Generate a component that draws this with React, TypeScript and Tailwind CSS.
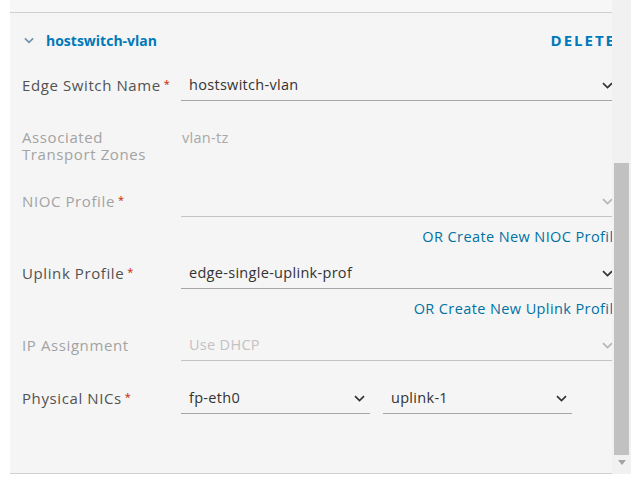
import React from 'react'

const FONT = { fontFamily: '"Open Sans", "Liberation Sans", sans-serif' }

function Caret({ className = '' }: { className?: string }) {
  return (
    <svg width="11" height="7" viewBox="0 0 11 7" className={className} fill="none">
      <path d="M1 1.2 L5.5 5.5 L10 1.2" stroke="currentColor" strokeWidth="1.7" />
    </svg>
  )
}

function Star() {
  return <span className="text-[#c92100] text-[11px] leading-none align-top ml-[3px] tracking-normal">*</span>
}

function Label({ text, req, disabled }: { text: string; req?: boolean; disabled?: boolean }) {
  return (
    <div className={`w-[159px] shrink-0 h-[25px] pb-[7px] flex items-center text-[15px] leading-[18px] tracking-[0.6px] whitespace-nowrap ${disabled ? 'text-[#a3a3a3]' : 'text-[#525252]'}`}>
      <span>{text}</span>
      {req && <span className="self-start mt-[2px]"><Star /></span>}
    </div>
  )
}

function Select({ value, disabled, className = '' }: { value: string; disabled?: boolean; className?: string }) {
  return (
    <div className={`h-[25px] border-b flex items-center justify-between pl-[8px] pb-[6px] ${disabled ? 'border-[#c4c4c4]' : 'border-[#a6a6a6]'} ${className}`}>
      <span className={`text-[14.5px] leading-[18px] tracking-[0.3px] ${disabled ? 'text-[#c2c2c2]' : 'text-[#333]'}`}>{value}</span>
      <Caret className={disabled ? 'text-[#b5b5b5]' : 'text-[#333]'} />
    </div>
  )
}

function Row({ label, req, disabled, children, className = '' }: {
  label: string; req?: boolean; disabled?: boolean; children: React.ReactNode; className?: string
}) {
  return (
    <div className={`flex h-[25px] ${className}`}>
      <Label text={label} req={req} disabled={disabled} />
      <div className="flex-1 flex">{children}</div>
    </div>
  )
}

function Link({ text, className = '' }: { text: string; className?: string }) {
  return (
    <div className={`h-[16px] flex items-center justify-end text-[14.5px] leading-[16px] tracking-[0.4px] text-[#0072a3] whitespace-nowrap ${className}`}>
      {text}
    </div>
  )
}

export default function App() {
  return (
    <div className="w-[636px] h-[485px] bg-white overflow-hidden" style={FONT}>
      <div className="flex ml-[10px] w-[621px] h-[474px]">
        <div className="w-[602px] h-full overflow-hidden bg-[#f5f5f5] border-b border-[#d0d0d0]">
          <div className="h-[12px] bg-[#f7f7f7] border-b border-[#cfcfcf] box-content" />
          <div className="w-[604px] pl-[12px]">
            {/* header */}
            <div className="mt-[13px] h-[28px] flex items-center justify-between">
              <div className="flex items-center">
                <Caret className="text-[#6d8fa8] ml-[2px] w-[10px]" />
                <span className="ml-[12px] text-[14px] font-bold text-[#0079b8]">hostswitch-vlan</span>
              </div>
              <span className="text-[15px] font-bold text-[#0079b8] tracking-[2px] mr-[-2px]">DELETE</span>
            </div>

            <Row label="Edge Switch Name" req className="mt-[22px]">
              <Select value="hostswitch-vlan" className="flex-1 pr-[1px]" />
            </Row>

            <div className="mt-[28px] flex h-[34px]">
              <div className="w-[159px] shrink-0 text-[15px] tracking-[0.6px] leading-[17px] text-[#a3a3a3]">
                Associated<br />Transport Zones
              </div>
              <div className="text-[14.5px] tracking-[0.3px] leading-[17px] text-[#a8a8a8] pl-[1px]">vlan-tz</div>
            </div>

            <Row label="NIOC Profile" req disabled className="mt-[29px]">
              <Select value="" disabled className="flex-1 pr-[1px]" />
            </Row>
            <Link text="OR Create New NIOC Profile" className="mt-[12px] mr-[-8px]" />

            <Row label="Uplink Profile" req className="mt-[19px]">
              <Select value="edge-single-uplink-prof" className="flex-1 pr-[1px]" />
            </Row>
            <Link text="OR Create New Uplink Profile" className="mt-[12px] mr-[-8px]" />

            <Row label="IP Assignment" disabled className="mt-[19px]">
              <Select value="Use DHCP" disabled className="flex-1 pr-[1px]" />
            </Row>

            <Row label="Physical NICs" req className="mt-[28px]">
              <Select value="fp-eth0" className="w-[189px] pr-[5px]" />
              <Select value="uplink-1" className="w-[189px] ml-[13px] pr-[5px]" />
            </Row>
          </div>
        </div>
        {/* scrollbar */}
        <div className="w-[19px] h-full bg-[#f1f1f1] flex flex-col items-center">
          <div className="mt-[163px] w-[15px] h-[292px] bg-[#c1c1c1]" />
          <div className="mt-[5px] w-0 h-0 border-l-[4px] border-r-[4px] border-t-[5px] border-l-transparent border-r-transparent border-t-[#a3a3a3]" />
        </div>
      </div>
    </div>
  )
}
